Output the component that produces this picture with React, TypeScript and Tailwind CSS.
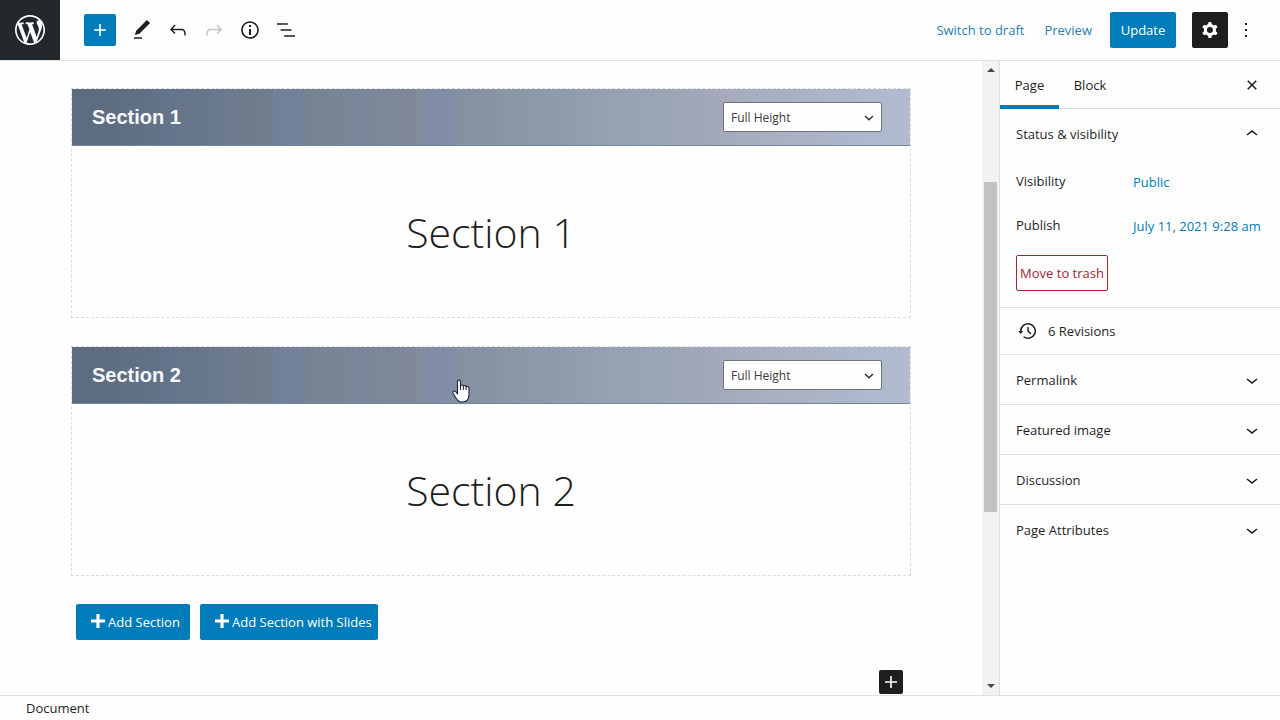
import type { ReactNode } from "react";

const ICONS = {
  plus: "M18 11.2h-5.2V6h-1.6v5.2H6v1.6h5.2V18h1.6v-5.2H18z",
  edit: "M20.1 5.1L16.9 2 6.2 12.7l-1.3 4.4 4.5-1.3L20.1 5.1zM4 20.8h8v-1.5H4v1.5z",
  undo: "M18.3 11.7c-.6-.6-1.4-.9-2.3-.9H6.7l2.9-3.3-1.1-1-4.5 5L8.5 16l1-1-2.7-2.7H16c.5 0 .9.2 1.3.5 1 1 1 3.4 1 4.5v.3h1.5v-.2c0-1.5 0-4.3-1.5-5.7z",
  redo: "M15.6 6.5l-1.1 1 2.9 3.3H8c-.9 0-1.7.3-2.3.9-1.4 1.5-1.4 4.2-1.4 5.6v.2h1.5v-.3c0-1.1 0-3.5 1-4.5.3-.3.7-.5 1.3-.5h9.2L14.5 15l1.1 1.1 4.6-4.6-4.6-5z",
  info: "M12 3.2c-4.8 0-8.8 3.9-8.8 8.8 0 4.8 3.9 8.8 8.8 8.8 4.8 0 8.8-3.9 8.8-8.8 0-4.8-4-8.8-8.8-8.8zm0 16c-4 0-7.2-3.3-7.2-7.2C4.8 8 8 4.8 12 4.8s7.2 3.3 7.2 7.2c0 4-3.2 7.2-7.2 7.2zM11 17h2v-6h-2v6zm0-8h2V7h-2v2z",
  list: "M13.8 5.2H3v1.5h10.8V5.2zm-3.6 12v1.5H21v-1.5H10.2zm7.2-6H6.6v1.5h10.8v-1.5z",
  cog: "M10.289 4.836A1 1 0 0111.275 4h1.306a1 1 0 01.987.836l.244 1.466c.787.26 1.503.679 2.108 1.218l1.393-.522a1 1 0 011.216.437l.653 1.13a1 1 0 01-.23 1.273l-1.148.944a6.025 6.025 0 010 2.435l1.149.946a1 1 0 01.23 1.272l-.653 1.13a1 1 0 01-1.216.437l-1.394-.522c-.605.54-1.32.958-2.108 1.218l-.244 1.466a1 1 0 01-.987.836h-1.306a1 1 0 01-.986-.836l-.244-1.466a5.995 5.995 0 01-2.108-1.218l-1.394.522a1 1 0 01-1.217-.436l-.653-1.131a1 1 0 01.23-1.272l1.149-.946a6.026 6.026 0 010-2.435l-1.148-.944a1 1 0 01-.23-1.272l.653-1.131a1 1 0 011.217-.437l1.393.522a5.994 5.994 0 012.108-1.218l.244-1.466zM14.929 12a3 3 0 11-6 0 3 3 0 016 0z",
  more: "M13 19h-2v-2h2v2zm0-6h-2v-2h2v2zm0-6h-2V5h2v2z",
  close:
    "M12 13.06l3.712 3.713 1.061-1.06L13.061 12l3.712-3.712-1.06-1.06L12 10.938 8.288 7.227l-1.061 1.06L10.939 12l-3.712 3.712 1.06 1.061L12 13.061z",
  up: "M6.5 12.4L12 8l5.5 4.4-.9 1.2L12 10l-4.5 3.6-1-1.2z",
  down: "M17.5 11.6L12 16l-5.5-4.4.9-1.2L12 14l4.5-3.6 1 1.2z",
  backup:
    "M5.5 12h1.75l-2.5 3-2.5-3H4a8 8 0 113.134 6.35l.907-1.194A6.5 6.5 0 105.5 12zm9.53 1.97l-2.28-2.28V8.5a.75.75 0 00-1.5 0V12a.747.747 0 00.218.529l1.282-.84-1.28.842 2.5 2.5a.75.75 0 101.06-1.061z",
};

function Icon({ name }: { name: keyof typeof ICONS }) {
  return (
    <svg viewBox="0 0 24 24" className="size-6 shrink-0" fill="currentColor" fillRule="evenodd" aria-hidden="true">
      <path d={ICONS[name]} />
    </svg>
  );
}

function ToolButton({ name, label, disabled }: { name: keyof typeof ICONS; label: string; disabled?: boolean }) {
  return (
    <button
      type="button"
      aria-label={label}
      disabled={disabled}
      className="flex size-9 items-center justify-center disabled:text-[#c9c4c8]"
    >
      <Icon name={name} />
    </button>
  );
}

function TopBar() {
  return (
    <header className="flex h-[61px] shrink-0 items-center border-b border-[#e0e0e2]">
      <a href="#pages" aria-label="View pages" className="flex h-[60px] w-[60px] items-center justify-center self-start bg-[#23282d] text-white">
        <svg viewBox="-2 -2 24 24" className="size-9" fill="currentColor" aria-hidden="true">
          <path d="M20 10c0-5.51-4.49-10-10-10C4.48 0 0 4.49 0 10c0 5.52 4.48 10 10 10 5.51 0 10-4.48 10-10zM7.78 15.37L4.37 6.22c.55-.02 1.17-.08 1.17-.08.5-.06.44-1.13-.06-1.11 0 0-1.45.11-2.37.11-.18 0-.37 0-.58-.01C4.12 2.69 6.87 1.11 10 1.11c2.33 0 4.45.87 6.05 2.34-.68-.11-1.65.39-1.65 1.58 0 .74.45 1.36.9 2.1.35.61.55 1.36.55 2.46 0 1.49-1.4 5-1.4 5l-3.03-8.37c.54-.02.82-.17.82-.17.5-.05.44-1.25-.06-1.22 0 0-1.44.12-2.38.12-.87 0-2.33-.12-2.33-.12-.5-.03-.56 1.2-.06 1.22l.92.08 1.26 3.41zM17.41 10c.24-.64.74-1.87.43-4.25.7 1.29 1.05 2.71 1.05 4.25 0 3.29-1.73 6.24-4.4 7.78.97-2.59 1.94-5.2 2.92-7.78zM6.1 18.09C3.12 16.65 1.11 13.53 1.11 10c0-1.3.23-2.48.72-3.59C3.25 10.3 4.67 14.2 6.1 18.09zm4.03-6.63l2.58 6.98c-.86.29-1.76.45-2.71.45-.79 0-1.57-.11-2.29-.33.81-2.38 1.62-4.74 2.42-7.1z" />
        </svg>
      </a>
      <div className="ml-6 flex items-center">
        <button type="button" aria-label="Add block" className="mr-2 flex size-8 items-center justify-center rounded-xs bg-[#007cba] text-white">
          <Icon name="plus" />
        </button>
        <ToolButton name="edit" label="Tools" />
        <ToolButton name="undo" label="Undo" />
        <ToolButton name="redo" label="Redo" disabled />
        <ToolButton name="info" label="Details" />
        <ToolButton name="list" label="List view" />
      </div>
      <div className="ml-auto flex items-center pr-[22px]">
        <button type="button" className="mr-5 h-9 pt-0.5 text-[#2a7fb2]">Switch to draft</button>
        <button type="button" className="mr-[18px] h-9 pt-0.5 text-[#2a7fb2]">Preview</button>
        <button type="button" className="mr-4 h-9 w-[66px] rounded-xs bg-[#007cba] pt-0.5 text-white">Update</button>
        <button type="button" aria-label="Settings" className="flex size-9 items-center justify-center rounded-xs bg-[#1e1e1e] text-white">
          <Icon name="cog" />
        </button>
        <button type="button" aria-label="Options" className="ml-1.5 flex h-9 w-6 items-center justify-center">
          <Icon name="more" />
        </button>
      </div>
    </header>
  );
}

function Section({ title, cursor }: { title: string; cursor?: ReactNode }) {
  return (
    <section className="flex h-[230px] flex-col border border-dashed border-[#dcdce0]">
      <div className="relative flex h-[57px] shrink-0 items-center justify-between border-b border-[#7485a0] bg-[linear-gradient(90deg,#5c6b80_0%,#5e6d80_5%,#64748a_12%,#68768a_16%,#6b7a90_18%,#6f7c8c_20%,#707d8f_24%,#71809a_24%,#748199_28%,#76838f_28%,#7a869a_34%,#7f8899_41%,#808e9a_41%,#808ca6_43%,#8290a6_46%,#8590a2_46%,#8793a3_50%,#8a98a5_52%,#8c99aa_56%,#919dae_60%,#94a0b0_62%,#98a3b5_68%,#9ca6b5_72%,#a3a7ba_76%,#a6adbf_80%,#abb2c6_88%,#adb8cc_94%,#b2bbd0_100%)] pr-7 pl-5">
        <h2 className="font-['Liberation_Sans',sans-serif] text-[20px] font-bold text-[#f6f9fd]">{title}</h2>
        <div className="relative">
          <select
            aria-label={`${title} height`}
            className="block h-[30px] w-[159px] appearance-none rounded-xs border border-[#6f7480] bg-[#fefefe] pt-0.5 pl-[7px] text-[12px] text-[#3a3a42]"
          >
            <option>Full Height</option>
            <option>Fixed Height</option>
          </select>
          <svg viewBox="0 0 10 6" className="pointer-events-none absolute top-[13px] right-2 h-1.5 w-2.5" fill="none" stroke="#2c3338" strokeWidth="1.5" aria-hidden="true">
            <path d="M1 1l4 3.8L9 1" />
          </svg>
        </div>
        {cursor}
      </div>
      <p className="flex flex-1 items-center justify-center pt-0.5 text-[41px] font-[350]">{title}</p>
    </section>
  );
}

function HandCursor() {
  return (
    <svg viewBox="0 0 18 24" className="absolute top-8 left-[380px] h-6 w-[18px]" aria-hidden="true">
      <path
        d="M5.5 2.6c0-2 3-2 3 0v4c.6-.9 2.6-.7 2.8.5.6-.9 2.6-.7 2.8.7.8-.8 2.9-.4 2.9 1.3v6.4c0 4.7-2.6 7.5-6.8 7.5-3.5 0-5.2-2-6.4-4.3L1 14.2c-1-1.9 1.4-3 2.7-1.5l1.8 2z"
        fill="#fff"
        stroke="#1b2434"
        strokeWidth="1.1"
      />
      <path d="M8.5 6.5v4.5M11.3 7.5V11M14.1 8.3V11" stroke="#1b2434" strokeWidth="1" fill="none" />
    </svg>
  );
}

function AddButton({ children, width }: { children: string; width: string }) {
  return (
    <button type="button" className={`flex h-9 items-center gap-[3px] rounded-xs bg-[#007cba] pl-[15px] whitespace-nowrap text-white ${width}`}>
      <svg viewBox="0 0 14 14" className="mb-0.5 size-3.5 shrink-0" fill="currentColor" aria-hidden="true">
        <path d="M5.4 0h3.2v5.4H14v3.2H8.6V14H5.4V8.6H0V5.4h5.4z" />
      </svg>
      <span className="pt-0.5">{children}</span>
    </button>
  );
}

function Scrollbar() {
  return (
    <div className="flex w-[17px] shrink-0 flex-col items-center bg-[#f4f1f4]" aria-hidden="true">
      <svg viewBox="0 0 8 4" className="mt-[7px] h-1 w-2" fill="#4a474b"><path d="M0 4l4-4 4 4z" /></svg>
      <div className="mt-[110px] h-[330px] w-[13px] bg-[#c5c1c3]" />
      <svg viewBox="0 0 8 4" className="mt-auto mb-[7px] h-1 w-2" fill="#4a474b"><path d="M0 0l4 4 4-4z" /></svg>
    </div>
  );
}

function Sidebar() {
  return (
    <aside className="w-[281px] shrink-0 border-l border-[#e0e0e2]">
      <div className="flex h-12 items-stretch border-b border-[#dcdce0]">
        <button type="button" className="-mb-px w-[59px] border-b-4 border-[#007cba] pt-1.5">Page</button>
        <button type="button" className="w-[62px] pt-0.5">Block</button>
        <button type="button" aria-label="Close settings" className="mr-4 ml-auto">
          <Icon name="close" />
        </button>
      </div>
      <div className="border-b border-[#e0e0e2] px-4 pb-4">
        <button type="button" aria-expanded="true" className="flex h-[50px] w-full items-center justify-between">
          <span className="pt-0.5">Status &amp; visibility</span>
          <Icon name="up" />
        </button>
        <div className="mt-1 flex h-9 items-center pt-0.5">
          <span className="w-[117px]">Visibility</span>
          <button type="button" className="pt-0.5 text-[#007cba]">Public</button>
        </div>
        <div className="mt-2 flex h-9 items-center pt-0.5">
          <span className="w-[117px] shrink-0">Publish</span>
          <button type="button" className="pt-0.5 whitespace-nowrap text-[#007cba]">July 11, 2021 9:28 am</button>
        </div>
        <button type="button" className="mt-3 flex h-9 w-[92px] items-center justify-center rounded-xs border border-[#a02636] pt-0.5 whitespace-nowrap text-[#a02636]">
          Move to trash
        </button>
      </div>
      <a href="#revisions" className="flex h-[47px] items-center gap-2 border-b border-[#e0e0e2] px-4">
        <Icon name="backup" />
        <span className="pt-0.5">6 Revisions</span>
      </a>
      {["Permalink", "Featured image", "Discussion", "Page Attributes"].map((label) => (
        <button
          key={label}
          type="button"
          aria-expanded="false"
          className="flex h-[50px] w-full items-center justify-between border-b border-[#e0e0e2] px-4 last:border-b-0"
        >
          <span className="pt-0.5">{label}</span>
          <Icon name="down" />
        </button>
      ))}
    </aside>
  );
}

export default function App() {
  return (
    <div className="flex h-screen flex-col bg-[#fefefe] font-['Open_Sans','Noto_Sans',sans-serif] text-[13px] text-[#1e1e1e]">
      <TopBar />
      <div className="flex min-h-0 flex-1">
        <main className="flex min-w-0 flex-1 flex-col gap-7 overflow-hidden px-[71px] pt-[27px]">
          <Section title="Section 1" />
          <Section title="Section 2" cursor={<HandCursor />} />
          <div className="flex gap-2.5 pl-[5px]">
            <AddButton width="w-[114px]">Add Section</AddButton>
            <AddButton width="w-[178px]">Add Section with Slides</AddButton>
          </div>
          <button type="button" aria-label="Add block" className="mt-0.5 mr-2 flex size-6 items-center justify-center self-end rounded-xs bg-[#1e1e1e] text-white">
            <Icon name="plus" />
          </button>
        </main>
        <Scrollbar />
        <Sidebar />
      </div>
      <footer className="flex h-[25px] shrink-0 items-center border-t border-[#e0e0e2] px-[26px] pt-0.5">Document</footer>
    </div>
  );
}
